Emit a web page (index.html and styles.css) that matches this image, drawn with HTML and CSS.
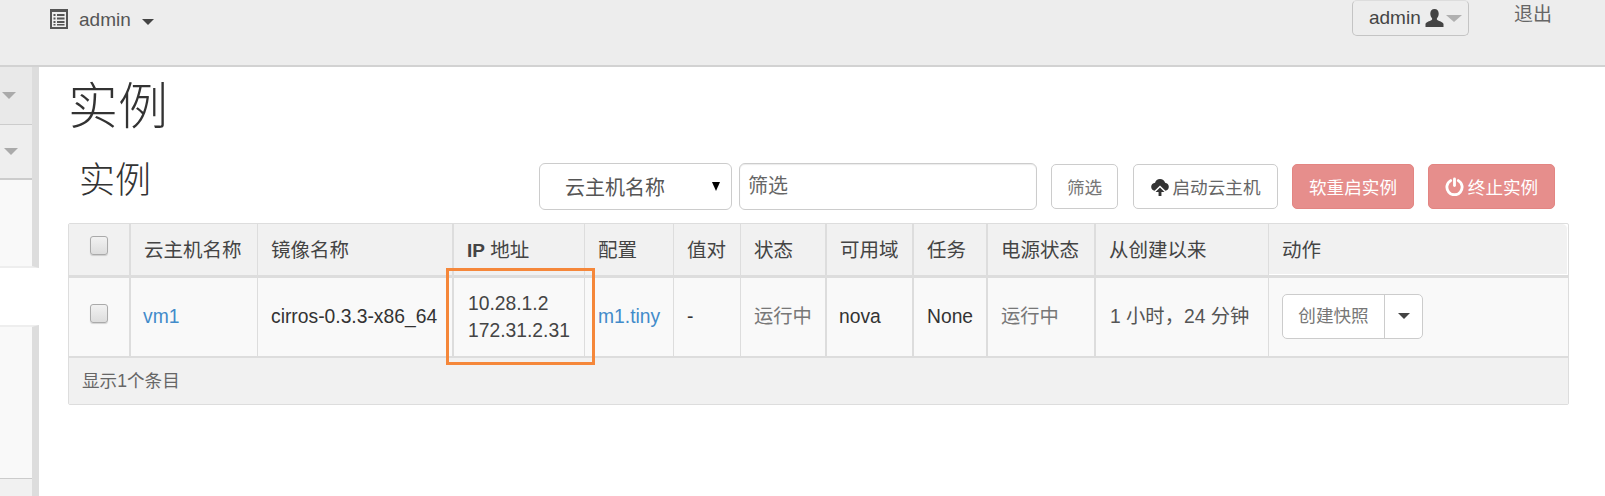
FILE: index.html
```html
<!DOCTYPE html>
<html lang="zh-CN">
<head>
<meta charset="utf-8">
<title>实例</title>
<link rel="stylesheet" href="styles.css">
</head>
<body>
<header class="topbar">
  <div class="project">
    <svg class="icon-list" viewBox="0 0 18 20" width="18" height="20" aria-hidden="true">
      <path fill="#555" fill-rule="evenodd" d="M0 0h18v20H0zM2 3v15h14V3z"/>
      <path fill="#555" d="M3.500 5h2v2h-2zM7 5h7.500v2H7zM3.500 8.500h2v2h-2zM7 8.500h7.500v2H7zM3.500 12h2v2h-2zM7 12h7.500v2H7zM3.500 15h2v1.500h-2zM7 15h7.500v1.500H7z"/>
    </svg>
    <span class="project-name">admin</span>
    <span class="caret caret-dark"></span>
  </div>
  <div class="account">
    <div class="user-btn">
      <span>admin</span>
      <svg class="icon-user" viewBox="0 0 19 18" width="19" height="18" aria-hidden="true">
        <path fill="#444" d="M9.500 0C6.800 0 5.300 2 5.300 4.500c0 2 .7 3.600 1.700 4.800.3.500.2 1.300-.3 1.600C4.500 12.200 1 12.800.5 15v3h18v-3c-.5-2.200-4-2.800-6.200-4.100-.5-.3-.6-1.100-.3-1.600 1-1.200 1.700-2.800 1.700-4.800C13.700 2 12.200 0 9.500 0z"/>
      </svg>
      <span class="caret caret-light"></span>
    </div>
    <a class="logout">退出</a>
  </div>
</header>

<div class="page">
  <aside class="sidebar">
    <div class="side-group">
      <div class="side-item side-first"><span class="caret caret-side"></span></div>
      <div class="side-item side-second"><span class="caret caret-side"></span></div>
      <div class="side-fill"></div>
    </div>
    <div class="side-gap"></div>
    <div class="side-group side-lower">
      <div class="side-fill"></div>
      <div class="side-foot"></div>
    </div>
  </aside>

  <main class="content">
    <h1 class="page-title">实例</h1>
    <div class="toolbar">
      <h2 class="table-title">实例</h2>
      <div class="controls">
        <div class="select"><span>云主机名称</span><span class="select-arrow"></span></div>
        <input class="filter-input" type="text" placeholder="筛选">
        <button class="btn btn-filter">筛选</button>
        <button class="btn btn-launch">
          <svg viewBox="0 0 20 20" width="18" height="18" aria-hidden="true">
            <path fill="#333" d="M10 1c-2.800 0-4.900 1.700-5.500 4.200C2.100 5.400.2 7.300.2 9.700c0 2.400 1.600 4.100 3.800 4.500L10 8.400l6 5.800c2.200-.4 3.800-2.100 3.800-4.500 0-2.300-1.800-4.200-4.100-4.400C15 2.700 12.800 1 10 1z"/>
            <path fill="#333" d="M10 10.500l-5 5h3.400V20h3.200v-4.500H15z"/>
          </svg>
          <span>启动云主机</span>
        </button>
        <button class="btn btn-danger btn-reboot">软重启实例</button>
        <button class="btn btn-danger btn-stop">
          <svg viewBox="0 0 20 20" width="19" height="19" aria-hidden="true">
            <path fill="none" stroke="#fff" stroke-width="3" stroke-linecap="round" d="M6 3.800a8 8 0 1 0 8 0"/>
            <path fill="none" stroke="#fff" stroke-width="3" stroke-linecap="round" d="M10 2v7"/>
          </svg>
          <span>终止实例</span>
        </button>
      </div>
    </div>

    <div class="table-wrap">
      <table class="instances">
        <colgroup>
          <col class="c1"><col class="c2"><col class="c3"><col class="c4"><col class="c5"><col class="c6">
          <col class="c7"><col class="c8"><col class="c9"><col class="c10"><col class="c11"><col class="c12">
        </colgroup>
        <thead>
          <tr>
            <th class="thick cell-check"><input class="check" type="checkbox"></th>
            <th>云主机名称</th>
            <th class="thick">镜像名称</th>
            <th><b class="latin-bold">IP</b> 地址</th>
            <th>配置</th>
            <th>值对</th>
            <th class="thick">状态</th>
            <th class="thick">可用域</th>
            <th class="thick">任务</th>
            <th class="thick">电源状态</th>
            <th>从创建以来</th>
            <th class="last-head">动作</th>
          </tr>
        </thead>
        <tbody>
          <tr>
            <td class="thick cell-check"><input class="check" type="checkbox"></td>
            <td class="tight"><a class="link">vm1</a></td>
            <td class="thick">cirros-0.3.3-x86_64</td>
            <td class="ip">10.28.1.2<br>172.31.2.31</td>
            <td><a class="link">m1.tiny</a></td>
            <td>-</td>
            <td class="thick muted">运行中</td>
            <td class="thick tight">nova</td>
            <td class="thick">None</td>
            <td class="thick muted">运行中</td>
            <td class="since">1 小时，24 分钟</td>
            <td class="last-cell">
              <div class="split">
                <span class="split-main">创建快照</span>
                <span class="split-toggle"><span class="caret caret-dark"></span></span>
              </div>
            </td>
          </tr>
        </tbody>
        <tfoot>
          <tr><td colspan="12">显示1个条目</td></tr>
        </tfoot>
      </table>
      <div class="highlight"></div>
    </div>
  </main>
</div>
</body>
</html>
```

FILE: styles.css
```css
* { box-sizing: border-box; }

html, body {
  margin: 0;
  height: 496px;
  overflow: hidden;
  background: #fff;
  font-family: "Liberation Sans", "Noto Sans CJK SC", sans-serif;
  color: #333;
}

.topbar {
  height: 67px;
  background: #ededed;
  border-bottom: 2px solid #d2d2d2;
  display: flex;
  justify-content: space-between;
  align-items: flex-start;
  padding: 0 53px 0 50px;
}

.project {
  display: flex;
  align-items: center;
  height: 40px;
  color: #555;
  font-size: 19px;
}

.icon-list { display: block; margin-top: -2px; }
.project-name { margin-left: 11px; }
.project .caret { margin-left: 11px; margin-top: 4px; }

.caret {
  display: inline-block;
  width: 0;
  height: 0;
  border-style: solid;
  border-color: transparent;
  border-bottom-width: 0;
}

.caret-dark {
  border-width: 6px 6px 0;
  border-top-color: #444;
}

.caret-light {
  border-width: 7px 8px 0;
  border-top-color: #b0b0b0;
}

.caret-side {
  border-width: 7px 7px 0;
  border-top-color: #aaa;
}

.account {
  display: flex;
  align-items: flex-start;
}

.user-btn {
  width: 117px;
  height: 36px;
  padding-left: 16px;
  display: flex;
  align-items: center;
  gap: 4px;
  border: 1px solid #c4c4c4;
  border-top-color: #ddd;
  border-radius: 5px;
  font-size: 19px;
  color: #444;
}

.user-btn .caret { margin-left: -2px; }
.icon-user { display: block; }

.logout {
  margin-left: 45px;
  margin-top: 4px;
  font-size: 19px;
  line-height: 22px;
  color: #666;
}

.page {
  display: flex;
  height: 429px;
}

.sidebar {
  width: 39px;
  flex: none;
  display: flex;
  flex-direction: column;
}

.side-group {
  height: 201px;
  display: flex;
  flex-direction: column;
  border-right: 7px solid #ddd;
  border-bottom: 2px solid #eee;
}

.side-item {
  display: flex;
  align-items: center;
  border-bottom: 1px solid #ccc;
}

.side-first {
  height: 58px;
  padding-left: 2px;
  background: #e9e9e9;
}

.side-second {
  height: 55px;
  padding-left: 4px;
  background: #eee;
  border-bottom-width: 2px;
}

.side-fill {
  flex: 1;
  background: #f9f9f9;
}

.side-gap {
  height: 57px;
  background: #fff;
}

.side-lower {
  flex: 1;
  border-bottom: 0;
  border-top: 2px solid #eee;
}

.side-foot {
  height: 18px;
  background: #f1f1f1;
  border-top: 1px solid #ccc;
}

.content {
  flex: 1;
  min-width: 0;
  padding: 0 37px 0 29px;
}

.page-title {
  margin: 15px 0 0;
  height: 50px;
  font-size: 50px;
  line-height: 50px;
  font-weight: 300;
  color: #333;
}

.toolbar {
  display: flex;
  justify-content: space-between;
  align-items: center;
  margin-top: 31px;
  padding: 0 13px 0 11px;
  height: 47px;
}

.table-title {
  margin: 0 0 11px;
  font-size: 36px;
  line-height: 36px;
  font-weight: 300;
  color: #333;
}

.controls {
  display: flex;
  align-items: center;
}

.select {
  width: 193px;
  height: 47px;
  padding: 0 11px 0 25px;
  display: flex;
  align-items: center;
  justify-content: space-between;
  border: 1px solid #ccc;
  border-radius: 6px;
  background: #fff;
  font-size: 20px;
  color: #555;
}

.select-arrow {
  width: 0;
  height: 0;
  border-style: solid;
  border-color: #000 transparent transparent;
  border-width: 9px 4.500px 0;
}

.filter-input {
  width: 298px;
  height: 47px;
  margin-left: 7px;
  padding: 0 8px;
  border: 1px solid #ccc;
  border-radius: 6px;
  box-shadow: inset 0 1px 1px rgba(0, 0, 0, .08);
  font-family: inherit;
  font-size: 20px;
  color: #555;
  outline: 0;
}

.filter-input::placeholder { color: #666; opacity: 1; }

.btn {
  height: 45px;
  display: flex;
  align-items: center;
  justify-content: center;
  gap: 4px;
  padding: 0;
  border: 1px solid #ccc;
  border-radius: 5px;
  background: #fff;
  font-family: inherit;
  font-size: 17.600px;
  color: #777;
}

.btn-filter { width: 67px; margin-left: 14px; }
.btn-launch { width: 145px; margin-left: 15px; color: #666; }

.btn-danger {
  background: #e68e8c;
  border-color: #e38582;
  color: #fff;
}

.btn-reboot { width: 122px; margin-left: 14px; }
.btn-stop { width: 127px; margin-left: 14px; }

.table-wrap {
  position: relative;
  margin-top: 13px;
}

.instances {
  width: 1500px;
  table-layout: fixed;
  border-collapse: separate;
  border-spacing: 0;
  border: 1px solid #ddd;
  border-radius: 2px;
  font-size: 19.300px;
}

.c1 { width: 62px; }
.c2 { width: 127px; }
.c3 { width: 196px; }
.c4 { width: 131px; }
.c5 { width: 89px; }
.c6 { width: 67px; }
.c7 { width: 86px; }
.c8 { width: 87px; }
.c9 { width: 74px; }
.c10 { width: 108px; }
.c11 { width: 173px; }
.c12 { width: 299px; }

.instances th,
.instances td {
  padding: 0 0 0 13px;
  text-align: left;
  border-right: 1px solid #ddd;
}

.instances th.thick,
.instances td.thick { border-right-width: 2px; }

.instances th {
  height: 54px;
  padding-bottom: 2px;
  background: #f1f1f1;
  border-bottom: 3px solid #ddd;
  font-size: 19.500px;
  font-weight: 400;
  color: #444;
}

.latin-bold { font-weight: 700; font-size: 19px; }

.instances tbody td {
  height: 80px;
  padding-bottom: 2px;
  background: #f9f9f9;
  border-bottom: 2px solid #ddd;
  line-height: 27px;
  color: #333;
}

.instances th.cell-check,
.instances td.cell-check { padding-left: 21px; padding-bottom: 0; }

.instances td.tight { padding-left: 12px; }
.instances td.ip { padding-left: 14px; padding-bottom: 0; }

.check {
  appearance: none;
  display: block;
  width: 18px;
  height: 19px;
  margin: 0 0 8px;
  border: 1px solid #aaa;
  border-radius: 3px;
  background: linear-gradient(#f2f2f2, #ddd);
  box-shadow: 0 1px 1px rgba(0, 0, 0, .15);
}

.instances th.last-head {
  border-right: 0;
  border-top-right-radius: 6px;
  box-shadow: inset -1px -1px 0 #fff;
}

.instances td.last-cell { border-right: 0; padding-bottom: 0; }

.instances tfoot td {
  height: 46px;
  padding-bottom: 3px;
  background: #f1f1f1;
  border-right: 0;
  padding-left: 13px;
  font-size: 17.600px;
  color: #666;
}

.link { color: #428bca; }
.muted { color: #777 !important; }
.ip { color: #444 !important; }
.instances tbody td.since { color: #555; padding-left: 14px; }

.split {
  display: flex;
  width: 141px;
  height: 45px;
  margin-bottom: 2px;
  border: 1px solid #ccc;
  border-radius: 5px;
  background: #fff;
  font-size: 17.600px;
  color: #777;
}

.split-main {
  width: 102px;
  display: flex;
  align-items: center;
  justify-content: center;
  border-right: 1px solid #ccc;
}

.split-toggle {
  flex: 1;
  display: flex;
  align-items: center;
  justify-content: center;
}

.highlight {
  position: absolute;
  left: 378px;
  top: 45px;
  width: 149px;
  height: 97px;
  border: 3px solid #f5873a;
}
```
